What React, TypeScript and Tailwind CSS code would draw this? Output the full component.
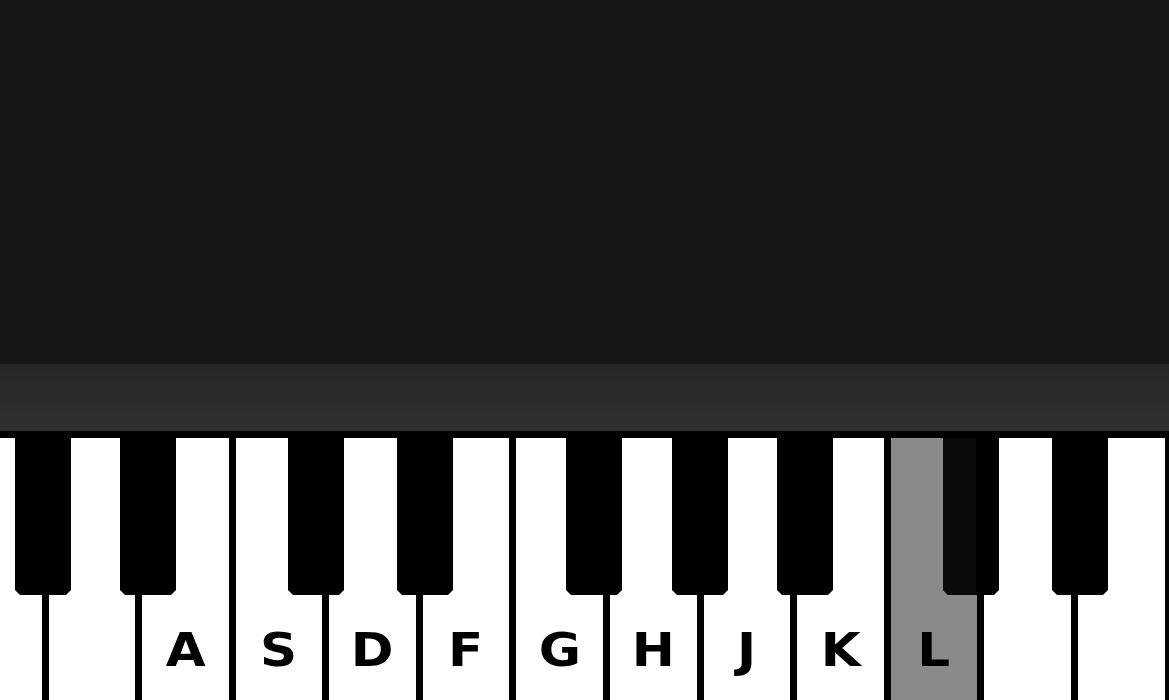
import React from 'react';

// white keys from the left edge (first one is cut off); null = no label
const whiteKeys: (string | null)[] = [null, null, 'A', 'S', 'D', 'F', 'G', 'H', 'J', 'K', 'L', null, null, null];
const activeKey = 'L';

// left edges of the black keys, in px
const blackKeys = [15, 120, 288, 397, 566, 672, 777, 943, 1052];

export default function App() {
  return (
    <div className="h-[700px] w-full overflow-hidden bg-[#161616] flex flex-col">
      <div className="h-[364px] shrink-0" />
      <div className="h-[67px] shrink-0 bg-gradient-to-b from-[#252525] to-[#313131]" />

      {/* keyboard */}
      <div className="relative flex-1 bg-black pt-[7px] overflow-hidden">
        <div className="flex h-full ml-[-45.1px]">
          {whiteKeys.map((label, i) => (
            <div
              key={i}
              className={`w-[93.6px] shrink-0 h-full border-r-[7px] border-black flex justify-center pt-[189px] ${
                label === activeKey ? 'bg-[#8a8a8a]' : 'bg-white'
              }`}
            >
              {label && (
                <span className="inline-block scale-x-[1.12] text-[46px] leading-none font-bold text-black [font-family:'DejaVu_Sans',sans-serif]">
                  {label}
                </span>
              )}
            </div>
          ))}
        </div>

        {blackKeys.map((left) => (
          <div
            key={left}
            className="absolute top-0 w-[56px] h-[164px] bg-black [clip-path:polygon(0_0,56px_0,56px_159px,51px_164px,5px_164px,0_159px)]"
            style={{ left }}
          >
            {left === 943 && <div className="absolute left-0 top-[7px] bottom-0 w-[33px] bg-[#0b0b0b]" />}
          </div>
        ))}
      </div>
    </div>
  );
}
